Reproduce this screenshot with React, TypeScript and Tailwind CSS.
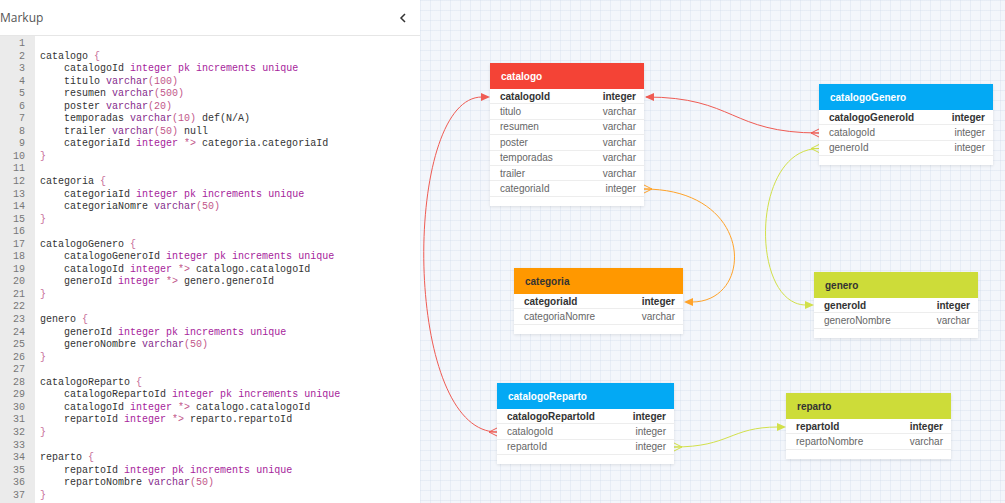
import React from "react";

type Col = { name: string; type: string };
type Table = {
  name: string;
  left: number;
  top: number;
  width: number;
  head: string;
  cols: Col[];
};

const code = `
catalogo {
    catalogoId integer pk increments unique
    titulo varchar(100)
    resumen varchar(500)
    poster varchar(20)
    temporadas varchar(10) def(N/A)
    trailer varchar(50) null
    categoriaId integer *> categoria.categoriaId
}

categoria {
    categoriaId integer pk increments unique
    categoriaNomre varchar(50)
}

catalogoGenero {
    catalogoGeneroId integer pk increments unique
    catalogoId integer *> catalogo.catalogoId
    generoId integer *> genero.generoId
}

genero {
    generoId integer pk increments unique
    generoNombre varchar(50)
}

catalogoReparto {
    catalogoRepartoId integer pk increments unique
    catalogoId integer *> catalogo.catalogoId
    repartoId integer *> reparto.repartoId
}

reparto {
    repartoId integer pk increments unique
    repartoNombre varchar(50)
}`.split("\n");

const tokenColor = (t: string) => {
  if (t === "{" || t === "}") return "text-[#c76d98]";
  if (["integer", "pk", "increments", "unique"].includes(t)) return "text-[#a61d9b]";
  if (t === "varchar") return "text-[#862c8c]";
  if (t === "*>" || /^\(\d+\)$/.test(t)) return "text-[#c2578a]";
  return "text-[#333]";
};

const CodeLine = ({ text }: { text: string }) => {
  const parts = text.match(/(\s+|[{}]|\*>|\(\d+\)|varchar(?=\()|[^\s{}]+)/g) || [];
  return (
    <div className="h-[12.56px] whitespace-pre">
      {parts.map((p, i) => (
        <span key={i} className={tokenColor(p)}>
          {p}
        </span>
      ))}
    </div>
  );
};

const tables: Table[] = [
  {
    name: "catalogo",
    left: 70,
    top: 63,
    width: 154,
    head: "bg-[#f44336] text-white",
    cols: [
      { name: "catalogoId", type: "integer" },
      { name: "titulo", type: "varchar" },
      { name: "resumen", type: "varchar" },
      { name: "poster", type: "varchar" },
      { name: "temporadas", type: "varchar" },
      { name: "trailer", type: "varchar" },
      { name: "categoriaId", type: "integer" },
    ],
  },
  {
    name: "catalogoGenero",
    left: 399,
    top: 84,
    width: 174,
    head: "bg-[#03a9f4] text-white",
    cols: [
      { name: "catalogoGeneroId", type: "integer" },
      { name: "catalogoId", type: "integer" },
      { name: "generoId", type: "integer" },
    ],
  },
  {
    name: "categoria",
    left: 94,
    top: 268,
    width: 169,
    head: "bg-[#ff9800] text-[#333]",
    cols: [
      { name: "categoriaId", type: "integer" },
      { name: "categoriaNomre", type: "varchar" },
    ],
  },
  {
    name: "genero",
    left: 394,
    top: 272,
    width: 164,
    head: "bg-[#cddc39] text-[#333]",
    cols: [
      { name: "generoId", type: "integer" },
      { name: "generoNombre", type: "varchar" },
    ],
  },
  {
    name: "catalogoReparto",
    left: 77,
    top: 383,
    width: 177,
    head: "bg-[#03a9f4] text-white",
    cols: [
      { name: "catalogoRepartoId", type: "integer" },
      { name: "catalogoId", type: "integer" },
      { name: "repartoId", type: "integer" },
    ],
  },
  {
    name: "reparto",
    left: 366,
    top: 393,
    width: 165,
    head: "bg-[#cddc39] text-[#333]",
    cols: [
      { name: "repartoId", type: "integer" },
      { name: "repartoNombre", type: "varchar" },
    ],
  },
];

const EntityBox = ({ t }: { t: Table }) => (
  <div
    className="absolute bg-white shadow-[0_1px_3px_rgba(0,0,0,0.1)] pb-[9px] font-['Liberation_Sans',Arial,sans-serif] text-[10px]"
    style={{ left: t.left, top: t.top, width: t.width }}
  >
    <div className={`h-[26px] flex items-center pl-[11px] font-bold ${t.head}`}>{t.name}</div>
    {t.cols.map((c, i) => (
      <div
        key={c.name}
        className={`h-[15.4px] flex items-center justify-between pl-[10px] pr-[8px] border-b border-[#ededed] ${
          i === 0 ? "font-bold text-[#333]" : "text-[#666]"
        }`}
      >
        <span>{c.name}</span>
        <span>{c.type}</span>
      </div>
    ))}
  </div>
);

const Crow = ({ x, y, dir, color }: { x: number; y: number; dir: 1 | -1; color: string }) => (
  <g stroke={color} strokeWidth={1} fill="none">
    <line x1={x} y1={y - 4} x2={x + dir * 8} y2={y} />
    <line x1={x} y1={y + 4} x2={x + dir * 8} y2={y} />
    <line x1={x} y1={y} x2={x + dir * 8} y2={y} />
  </g>
);

const Arrow = ({ x, y, dir, color }: { x: number; y: number; dir: 1 | -1; color: string }) => (
  <polygon points={`${x},${y} ${x + dir * 9},${y - 4} ${x + dir * 9},${y + 4}`} fill={color} />
);

const red = "#ef5b53";
const orange = "#ffa32a";
const lime = "#d2e04a";

export default function App() {
  return (
    <div className="flex w-[1005px] h-[503px] overflow-hidden bg-white">
      <div className="w-[420px] flex flex-col shrink-0">
        <div className="h-[36px] flex items-center justify-between border-b border-[#e6e6e6] pr-[13px] font-['Open_Sans',sans-serif] text-[12px] text-[#555]">
          <span>Markup</span>
          <svg width="8" height="10" viewBox="0 0 8 10">
            <polyline points="6,1 2,5 6,9" fill="none" stroke="#333" strokeWidth="1.5" />
          </svg>
        </div>
        <div className="flex flex-1 font-['Liberation_Mono',monospace] text-[10px]">
          <div className="w-[35px] bg-[#ebebeb] text-right pr-[10px] text-[#777]">
            {code.map((_, i) => (
              <div key={i} className="h-[12.56px]">
                {i + 1}
              </div>
            ))}
          </div>
          <div className="pl-[5px]">
            {code.map((l, i) => (
              <CodeLine key={i} text={l} />
            ))}
          </div>
        </div>
      </div>
      <div className="relative flex-1 bg-[#f3f6fb] bg-[linear-gradient(rgba(200,213,232,0.3)_1px,transparent_1px),linear-gradient(90deg,rgba(200,213,232,0.3)_1px,transparent_1px)] bg-[size:10px_10px]">
        <svg className="absolute inset-0" width="585" height="503">
          <path d="M 399 133 C 310 133, 315 97, 226 97" fill="none" stroke={red} />
          <Arrow x={225} y={97} dir={1} color={red} />
          <Crow x={399} y={133} dir={-1} color={red} />

          <path d="M 77 432 C -18 432, -18 97, 62 97" fill="none" stroke={red} />
          <Arrow x={70} y={97} dir={-1} color={red} />
          <Crow x={77} y={432} dir={-1} color={red} />

          <path d="M 224 189 C 335 189, 335 302, 272 302" fill="none" stroke={orange} />
          <Arrow x={264} y={302} dir={1} color={orange} />
          <Crow x={224} y={189} dir={1} color={orange} />

          <path d="M 399 148.5 C 330 148.5, 330 305, 386 305" fill="none" stroke={lime} />
          <Arrow x={394} y={305} dir={-1} color={lime} />
          <Crow x={399} y={148.5} dir={-1} color={lime} />

          <path d="M 254 447 C 310 447, 310 427, 358 427" fill="none" stroke={lime} />
          <Arrow x={366} y={427} dir={-1} color={lime} />
          <Crow x={254} y={447} dir={1} color={lime} />
        </svg>
        {tables.map((t) => (
          <EntityBox key={t.name} t={t} />
        ))}
      </div>
    </div>
  );
}
